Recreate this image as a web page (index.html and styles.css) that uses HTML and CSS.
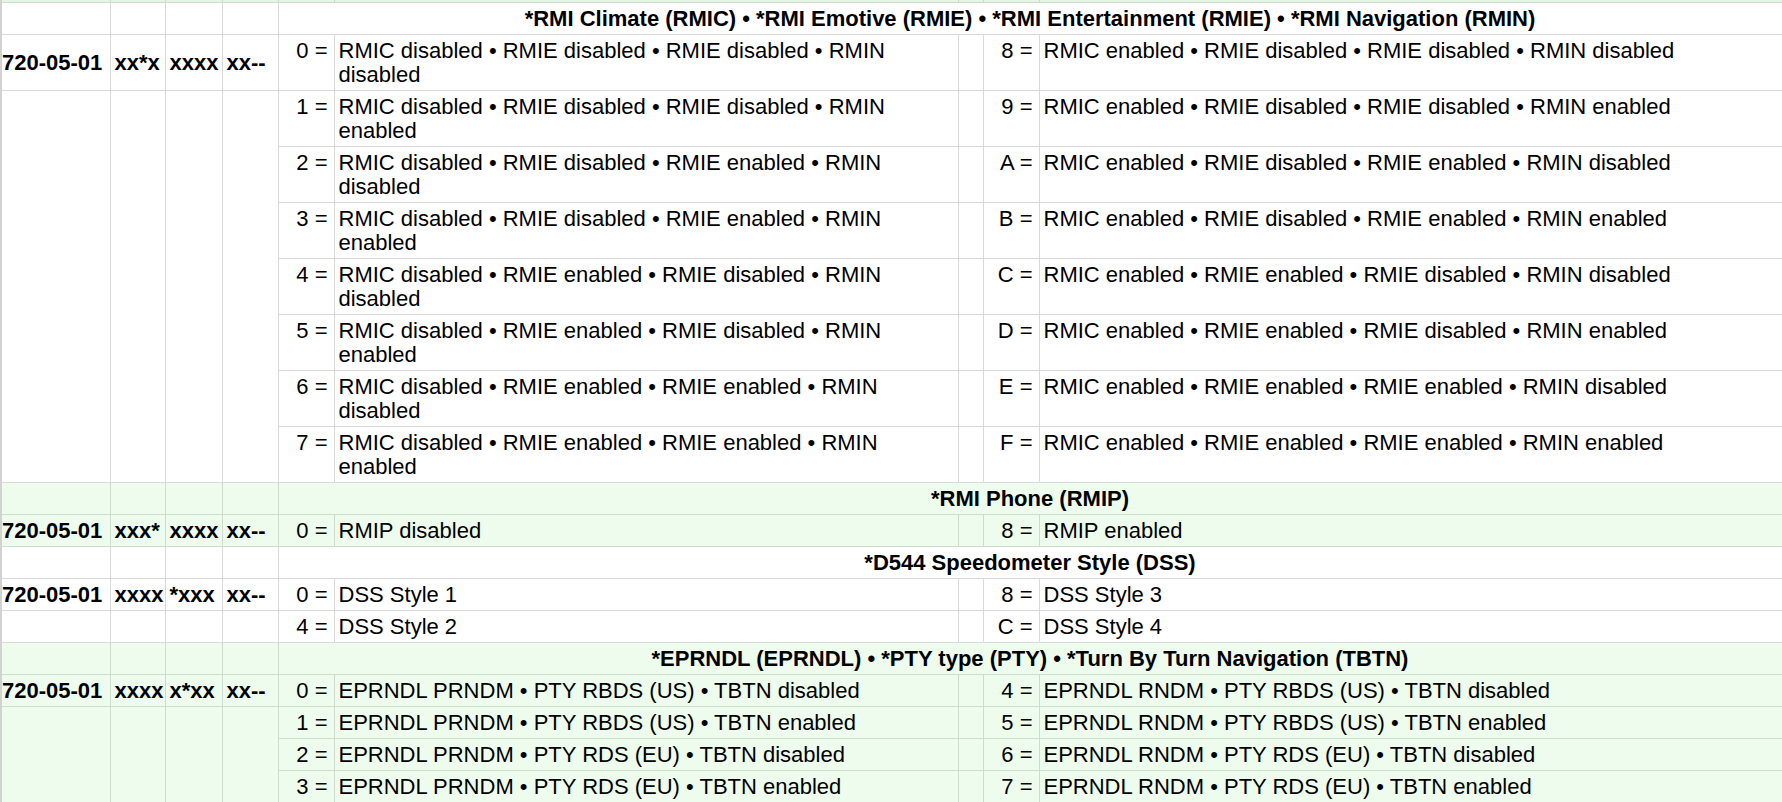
FILE: index.html
```html
<!DOCTYPE html>
<html>
<head>
<meta charset="utf-8">
<link rel="stylesheet" href="styles.css">
</head>
<body>
<table class="grid">
<colgroup>
<col class="c1"><col class="c2"><col class="c3"><col class="c4"><col class="c5"><col class="c6"><col class="c7"><col class="c8"><col class="c9">
</colgroup>
<tbody class="green">
<tr class="sliver"><td class="edge"></td><td></td><td></td><td></td><td></td><td></td><td></td><td></td><td></td></tr>
</tbody>
<tbody class="white">
<tr><td class="edge"></td><td></td><td></td><td></td><td class="hdr" colspan="5">*RMI Climate (RMIC) • *RMI Emotive (RMIE) • *RMI Entertainment (RMIE) • *RMI Navigation (RMIN)</td></tr>
<tr><td class="code edge">720-05-01</td><td class="code">xx*x</td><td class="code">xxxx</td><td class="code">xx--</td><td class="num">0 =</td><td class="txt">RMIC disabled • RMIE disabled • RMIE disabled • RMIN disabled</td><td></td><td class="num">8 =</td><td class="txt">RMIC enabled • RMIE disabled • RMIE disabled • RMIN disabled</td></tr>
<tr><td class="edge" rowspan="7"></td><td rowspan="7"></td><td rowspan="7"></td><td rowspan="7"></td><td class="num">1 =</td><td class="txt">RMIC disabled • RMIE disabled • RMIE disabled • RMIN enabled</td><td></td><td class="num">9 =</td><td class="txt">RMIC enabled • RMIE disabled • RMIE disabled • RMIN enabled</td></tr>
<tr><td class="num">2 =</td><td class="txt">RMIC disabled • RMIE disabled • RMIE enabled • RMIN disabled</td><td></td><td class="num">A =</td><td class="txt">RMIC enabled • RMIE disabled • RMIE enabled • RMIN disabled</td></tr>
<tr><td class="num">3 =</td><td class="txt">RMIC disabled • RMIE disabled • RMIE enabled • RMIN enabled</td><td></td><td class="num">B =</td><td class="txt">RMIC enabled • RMIE disabled • RMIE enabled • RMIN enabled</td></tr>
<tr><td class="num">4 =</td><td class="txt">RMIC disabled • RMIE enabled • RMIE disabled • RMIN disabled</td><td></td><td class="num">C =</td><td class="txt">RMIC enabled • RMIE enabled • RMIE disabled • RMIN disabled</td></tr>
<tr><td class="num">5 =</td><td class="txt">RMIC disabled • RMIE enabled • RMIE disabled • RMIN enabled</td><td></td><td class="num">D =</td><td class="txt">RMIC enabled • RMIE enabled • RMIE disabled • RMIN enabled</td></tr>
<tr><td class="num">6 =</td><td class="txt">RMIC disabled • RMIE enabled • RMIE enabled • RMIN disabled</td><td></td><td class="num">E =</td><td class="txt">RMIC enabled • RMIE enabled • RMIE enabled • RMIN disabled</td></tr>
<tr><td class="num">7 =</td><td class="txt">RMIC disabled • RMIE enabled • RMIE enabled • RMIN enabled</td><td></td><td class="num">F =</td><td class="txt">RMIC enabled • RMIE enabled • RMIE enabled • RMIN enabled</td></tr>
</tbody>
<tbody class="green">
<tr><td class="edge"></td><td></td><td></td><td></td><td class="hdr" colspan="5">*RMI Phone (RMIP)</td></tr>
<tr><td class="code edge">720-05-01</td><td class="code">xxx*</td><td class="code">xxxx</td><td class="code">xx--</td><td class="num">0 =</td><td class="txt">RMIP disabled</td><td></td><td class="num">8 =</td><td class="txt">RMIP enabled</td></tr>
</tbody>
<tbody class="white">
<tr><td class="edge"></td><td></td><td></td><td></td><td class="hdr" colspan="5">*D544 Speedometer Style (DSS)</td></tr>
<tr><td class="code edge">720-05-01</td><td class="code">xxxx</td><td class="code">*xxx</td><td class="code">xx--</td><td class="num">0 =</td><td class="txt">DSS Style 1</td><td></td><td class="num">8 =</td><td class="txt">DSS Style 3</td></tr>
<tr><td class="edge"></td><td></td><td></td><td></td><td class="num">4 =</td><td class="txt">DSS Style 2</td><td></td><td class="num">C =</td><td class="txt">DSS Style 4</td></tr>
</tbody>
<tbody class="green">
<tr><td class="edge"></td><td></td><td></td><td></td><td class="hdr" colspan="5">*EPRNDL (EPRNDL) • *PTY type (PTY) • *Turn By Turn Navigation (TBTN)</td></tr>
<tr><td class="code edge">720-05-01</td><td class="code">xxxx</td><td class="code">x*xx</td><td class="code">xx--</td><td class="num">0 =</td><td class="txt">EPRNDL PRNDM • PTY RBDS (US) • TBTN disabled</td><td></td><td class="num">4 =</td><td class="txt">EPRNDL RNDM • PTY RBDS (US) • TBTN disabled</td></tr>
<tr><td class="edge" rowspan="3"></td><td rowspan="3"></td><td rowspan="3"></td><td rowspan="3"></td><td class="num">1 =</td><td class="txt">EPRNDL PRNDM • PTY RBDS (US) • TBTN enabled</td><td></td><td class="num">5 =</td><td class="txt">EPRNDL RNDM • PTY RBDS (US) • TBTN enabled</td></tr>
<tr><td class="num">2 =</td><td class="txt">EPRNDL PRNDM • PTY RDS (EU) • TBTN disabled</td><td></td><td class="num">6 =</td><td class="txt">EPRNDL RNDM • PTY RDS (EU) • TBTN disabled</td></tr>
<tr><td class="num">3 =</td><td class="txt">EPRNDL PRNDM • PTY RDS (EU) • TBTN enabled</td><td></td><td class="num">7 =</td><td class="txt">EPRNDL RNDM • PTY RDS (EU) • TBTN enabled</td></tr>
</tbody>
</table>
</body>
</html>
```
FILE: styles.css
```css
html, body {
  margin: 0;
  padding: 0;
  background: #ffffff;
}
body {
  font-family: "Liberation Sans", Arial, Helvetica, sans-serif;
  font-size: 22px;
  color: #000000;
  overflow: hidden;
}
.grid {
  border-collapse: collapse;
  table-layout: fixed;
  width: 1781px;
}
.c1 { width: 109px; }
.c2 { width: 55px; }
.c3 { width: 57px; }
.c4 { width: 56px; }
.c5 { width: 56px; }
.c6 { width: 624px; }
.c7 { width: 25px; }
.c8 { width: 56px; }
.c9 { width: 743px; }
.grid td {
  border: 1px solid #d9d9d9;
  padding: 4px 4px 3px 4px;
  line-height: 24px;
  vertical-align: top;
  overflow: hidden;
  white-space: normal;
}
.grid td.edge {
  border-left: 2px solid #d2d2d2;
}
.green td {
  background: #eefcee;
  border-color: #cddccd;
}
.sliver td {
  height: 2px;
  padding: 0;
  line-height: 0;
  font-size: 0;
  border-top: none;
  background: #e4f5e4;
}
.grid td.code {
  font-weight: bold;
  white-space: nowrap;
  vertical-align: middle;
  padding-left: 4px;
  padding-right: 0;
}
.grid td.code.edge {
  padding-left: 0;
}
.grid td.num {
  text-align: right;
  white-space: nowrap;
  padding-right: 6px;
  padding-left: 0;
}
.grid td.txt {
  padding-left: 4px;
  padding-right: 6px;
}
.grid td.hdr {
  font-weight: bold;
  text-align: center;
  white-space: nowrap;
}
```
